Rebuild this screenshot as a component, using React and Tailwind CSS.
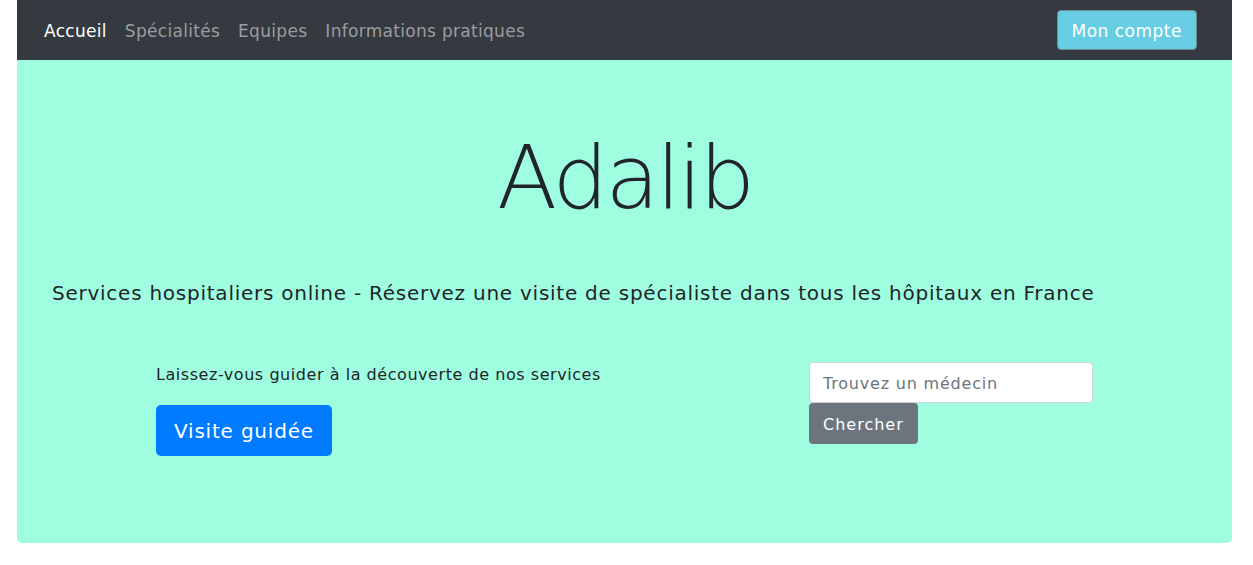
export default function App() {
  const font = { fontFamily: '"DejaVu Sans", "Noto Sans", sans-serif' };
  return (
    <div className="min-h-[565px] bg-white" style={font}>
      <div className="ml-[17px] mr-[21px]">
        <nav className="h-[60px] bg-[#343a40] flex items-center pl-[27px] pr-[35px]">
          <div className="flex items-center gap-[18px] text-[17px] tracking-[0.3px] mt-[3px]">
            <a className="text-white">Accueil</a>
            <a className="text-[#9a9da0]">Spécialités</a>
            <a className="text-[#9a9da0]">Equipes</a>
            <a className="text-[#9a9da0]">Informations pratiques</a>
          </div>
          <div className="ml-auto">
            <button className="h-[40px] px-[14px] pt-[3px] bg-[#66cde3] border border-[#6c8c93] rounded-[4px] text-white text-[17px] tracking-[0.5px]">
              Mon compte
            </button>
          </div>
        </nav>
        <div className="bg-[#a0fee0] rounded-b-[5px] pt-[65px] pb-[87px] pl-[35px]">
          <h1 className="text-center text-[88px] leading-[1.2] font-light tracking-[-3px] text-[#212529] -ml-[35px]">Adalib</h1>
          <p className="text-[20px] leading-[1.5] tracking-[0.75px] text-[#212529] mt-[47px]">
            Services hospitaliers online - Réservez une visite de spécialiste dans tous les hôpitaux en France
          </p>
          <div className="flex mt-[54px]">
            <div className="ml-[104px] w-[653px] pt-[1px]">
              <p className="text-[16px] leading-[24px] tracking-[0.55px] text-[#212529]">Laissez-vous guider à la découverte de nos services</p>
              <button className="mt-[18px] h-[51px] px-[18px] pt-[2px] bg-[#007bff] text-white text-[20px] tracking-[0.8px] rounded-[5px]">
                Visite guidée
              </button>
            </div>
            <div className="flex flex-col items-start">
              <input
                className="w-[284px] h-[41px] px-[13px] pt-[2px] bg-white border border-[#ced4da] rounded-[4px] text-[16px] tracking-[0.8px] placeholder:text-[#6c757d] outline-none"
                placeholder="Trouvez un médecin"
              />
              <button className="h-[41px] px-[14px] pt-[3px] bg-[#6c757d] text-white text-[16px] tracking-[1px] rounded-[4px]">
                Chercher
              </button>
            </div>
          </div>
        </div>
      </div>
    </div>
  );
}
